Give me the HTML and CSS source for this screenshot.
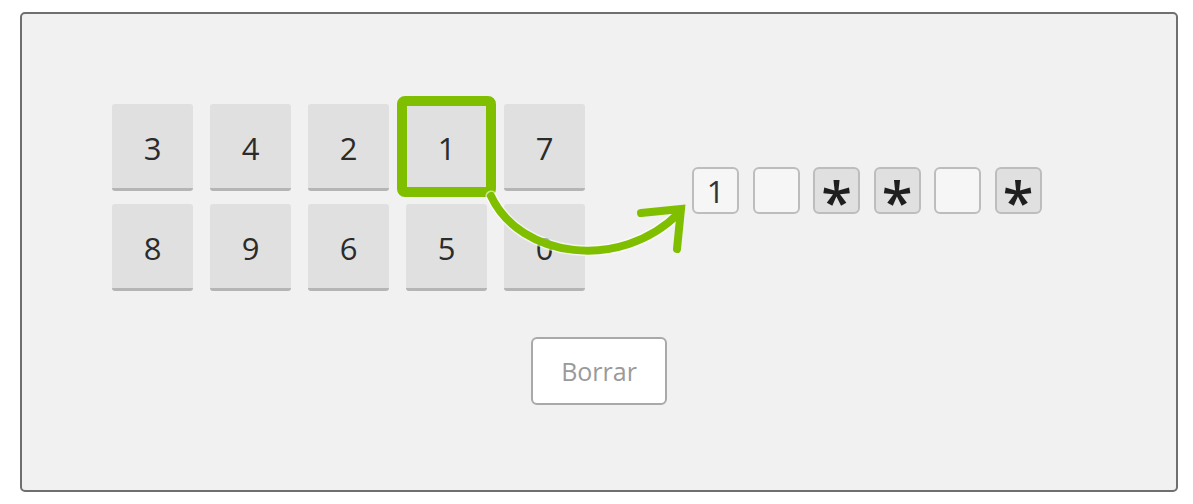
FILE: index.html
```html
<!DOCTYPE html>
<html lang="es">
<head>
<meta charset="utf-8">
<title>Teclado PIN</title>
<link rel="stylesheet" href="styles.css">
</head>
<body>
<div class="panel">
  <div class="main-row">
    <div class="keypad">
      <div class="key">3</div>
      <div class="key">4</div>
      <div class="key">2</div>
      <div class="key">1</div>
      <div class="key">7</div>
      <div class="key">8</div>
      <div class="key">9</div>
      <div class="key">6</div>
      <div class="key">5</div>
      <div class="key">0</div>
    </div>
    <div class="pins">
      <div class="pin">1</div>
      <div class="pin"></div>
      <div class="pin filled"><span class="star">*</span></div>
      <div class="pin filled"><span class="star">*</span></div>
      <div class="pin"></div>
      <div class="pin filled"><span class="star">*</span></div>
    </div>
  </div>
  <div class="actions">
    <button class="clear-btn">Borrar</button>
  </div>
  <svg class="annotation" width="1193" height="504" viewBox="0 0 1193 504" aria-hidden="true">
    <rect x="402" y="101" width="89" height="91" rx="3" fill="none" stroke="#80bf00" stroke-width="10"/>
    <path d="M491 196 C520 258, 620 272, 679 213" fill="none" stroke="#ffffff" stroke-opacity="0.6" stroke-width="11" stroke-linecap="round"/>
    <path d="M491 196 C520 258, 620 272, 679 213" fill="none" stroke="#80bf00" stroke-width="8" stroke-linecap="round"/>
    <polyline points="641,213 681,209 677,249" fill="none" stroke="#80bf00" stroke-width="8" stroke-linecap="round" stroke-linejoin="miter"/>
  </svg>
</div>
</body>
</html>
```

FILE: styles.css
```css
html, body {
  margin: 0;
  padding: 0;
  background: #ffffff;
}

body {
  font-family: "Open Sans", "Liberation Sans", sans-serif;
  padding: 12px 15px 12px 20px;
  width: 1193px;
  height: 504px;
  box-sizing: border-box;
}

.panel {
  position: relative;
  width: 1158px;
  height: 480px;
  box-sizing: border-box;
  border: 2px solid #6f6f6f;
  border-radius: 5px;
  background: #f1f1f1;
  padding: 90px 0 0 90px;
}

.main-row {
  display: flex;
  align-items: flex-start;
  gap: 107px;
}

.keypad {
  display: grid;
  grid-template-columns: repeat(5, 81px);
  grid-auto-rows: 87px;
  column-gap: 17px;
  row-gap: 13px;
}

.key {
  box-sizing: border-box;
  background: #e0e0e0;
  border-bottom: 3px solid #b5b5b5;
  border-radius: 3px;
  display: flex;
  align-items: center;
  justify-content: center;
  font-size: 31px;
  color: #2b2b2b;
  padding-top: 4px;
}

.pins {
  display: flex;
  gap: 13.5px;
  margin-top: 63px;
}

.pin {
  box-sizing: border-box;
  width: 47px;
  height: 47px;
  border: 2px solid #bdbdbd;
  border-radius: 6px;
  background: #f6f6f6;
  display: flex;
  align-items: center;
  justify-content: center;
  font-size: 31px;
  color: #333333;
}

.pin.filled {
  background: #e0e0e0;
}

.star {
  font-size: 56px;
  font-weight: 600;
  line-height: 1;
  color: #1e1e1e;
  padding-top: 18px;
}

.actions {
  display: flex;
  justify-content: center;
  margin-left: -90px;
  margin-top: 46px;
}

.clear-btn {
  box-sizing: border-box;
  width: 136px;
  height: 68px;
  background: #ffffff;
  border: 2px solid #a9a9a9;
  border-radius: 6px;
  font-family: "Open Sans", "Liberation Sans", sans-serif;
  font-size: 25px;
  color: #9a9a9a;
  padding: 0;
}

.annotation {
  position: absolute;
  left: -22px;
  top: -14px;
  pointer-events: none;
}
```
